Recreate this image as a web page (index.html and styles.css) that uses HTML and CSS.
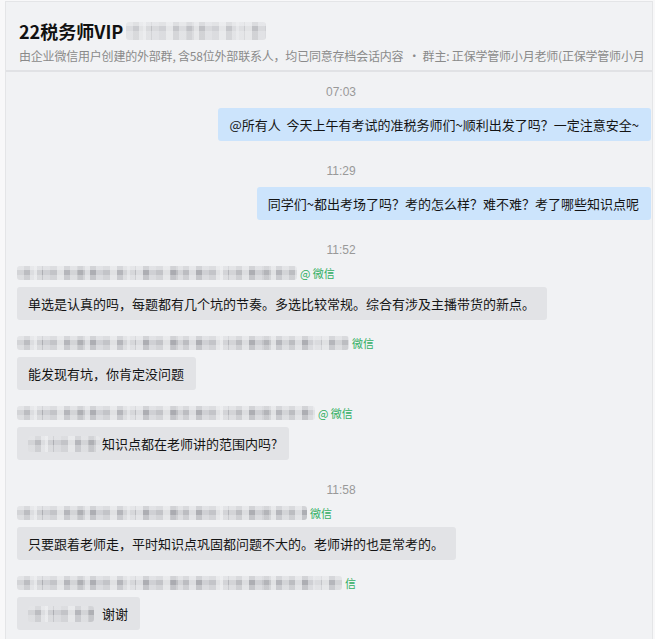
FILE: index.html
```html
<!DOCTYPE html>
<html lang="zh-CN">
<head>
  <meta charset="UTF-8" />
  <title>22税务师VIP</title>
  <link rel="stylesheet" href="styles.css">
</head>
<body>
  <div class="panel">
    <div class="header">
      <div class="title">22税务师VIP <span class="mosaic m-title"></span></div>
      <div class="sub">由企业微信用户创建的外部群, 含58位外部联系人，均已同意存档会话内容 &nbsp;· 群主: 正保学管师小月老师(正保学管师小月</div>
    </div>

    <div class="chat">
      <div class="time">07:03</div>
      <div class="msg mine">
        <div class="bubble">@所有人&nbsp; 今天上午有考试的准税务师们~顺利出发了吗？一定注意安全~</div>
      </div>

      <div class="time">11:29</div>
      <div class="msg mine">
        <div class="bubble">同学们~都出考场了吗？考的怎么样？难不难？考了哪些知识点呢</div>
      </div>

      <div class="time">11:52</div>
      <div class="msg">
        <div class="name"><span class="mosaic m-280"></span><span class="wx">@ 微信</span></div>
        <div class="bubble">单选是认真的吗，每题都有几个坑的节奏。多选比较常规。综合有涉及主播带货的新点。</div>
      </div>
      <div class="msg">
        <div class="name"><span class="mosaic m-332"></span><span class="wx">微信</span></div>
        <div class="bubble">能发现有坑，你肯定没问题</div>
      </div>
      <div class="msg">
        <div class="name"><span class="mosaic m-298"></span><span class="wx">@ 微信</span></div>
        <div class="bubble"><span class="mosaic m-at"></span>知识点都在老师讲的范围内吗?</div>
      </div>

      <div class="time">11:58</div>
      <div class="msg">
        <div class="name"><span class="mosaic m-290"></span><span class="wx">微信</span></div>
        <div class="bubble">只要跟着老师走，平时知识点巩固都问题不大的。老师讲的也是常考的。</div>
      </div>
      <div class="msg">
        <div class="name"><span class="mosaic m-325"></span><span class="wx">信</span></div>
        <div class="bubble"><span class="mosaic m-at2"></span>谢谢</div>
      </div>
    </div>
  </div>
</body>
</html>
```

FILE: styles.css
```css
body {
  margin: 0;
  background: #f8f8f9;
  font-family: "Noto Sans CJK SC", "Noto Sans", sans-serif;
  color: #1f1f1f;
}

.panel {
  margin: 1px 0 0 5px;
  width: 646px;
  height: 638px;
  background: #f1f2f4;
  border-top: 1px solid #e4e5e7;
  border-left: 1px solid #e4e5e7;
  border-right: 1px solid #e4e5e7;
  overflow: hidden;
}

.header {
  height: 68px;
  padding: 0 0 0 13px;
  border-bottom: 2px solid #e1e2e5;
}

.title {
  padding-top: 16px;
  font-size: 18px;
  font-weight: bold;
  line-height: 26px;
  color: #111;
  display: flex;
  align-items: center;
  gap: 3px;
}

.sub {
  margin-top: 3px;
  font-size: 12px;
  line-height: 17px;
  letter-spacing: -0.2px;
  color: #8a8a8a;
  white-space: nowrap;
}

.chat {
  padding: 13px 1px 0 11px;
}

.time {
  margin: 23px 0 8px;
  text-align: center;
  padding-left: 14px;
  font-family: "Liberation Sans", sans-serif;
  font-size: 12px;
  line-height: 15px;
  color: #999;
}

.time:first-child {
  margin-top: 0;
}

.msg {
  display: flex;
  flex-direction: column;
  align-items: flex-start;
}

.msg + .msg {
  margin-top: 16px;
}

.msg.mine {
  align-items: flex-end;
}

.name {
  display: flex;
  align-items: center;
  height: 14px;
  margin-bottom: 7px;
}

.wx {
  margin-left: 3px;
  font-size: 11px;
  color: #2fae61;
}

.bubble {
  display: flex;
  align-items: center;
  height: 33px;
  padding: 0 12px 0 11px;
  font-size: 13px;
  color: #141414;
  background: #e2e3e6;
  border-radius: 3px;
  white-space: nowrap;
}

.mine .bubble {
  background: #cce4fc;
}

.mosaic {
  display: inline-block;
  height: 14px;
  border-radius: 3px;
  background:
    linear-gradient(to bottom, rgba(241, 242, 244, 0.55) 0 4px, transparent 4px 9px, rgba(241, 242, 244, 0.35) 9px),
    repeating-linear-gradient(90deg, transparent 0 17px, rgba(241, 242, 244, 0.5) 17px 25px, transparent 25px 61px, rgba(150, 151, 156, 0.35) 61px 68px, transparent 68px 93px),
    repeating-linear-gradient(90deg, #d3d4d7 0 7px, #bcbdc1 7px 13px, #dcdde0 13px 20px, #adaeb3 20px 26px, #cfd0d4 26px 33px, #c3c4c8 33px 40px, #e0e1e3 40px 47px, #b5b6bb 47px 53px);
  filter: blur(0.6px);
}

.m-title {
  width: 140px;
  height: 18px;
  opacity: 0.7;
}

.m-280 { width: 280px; }
.m-332 { width: 332px; }
.m-298 { width: 298px; }
.m-290 { width: 290px; }
.m-325 { width: 325px; }

.m-at {
  width: 72px;
  height: 16px;
  margin-right: 2px;
}

.m-at2 {
  width: 66px;
  height: 16px;
  margin-right: 8px;
}
```
